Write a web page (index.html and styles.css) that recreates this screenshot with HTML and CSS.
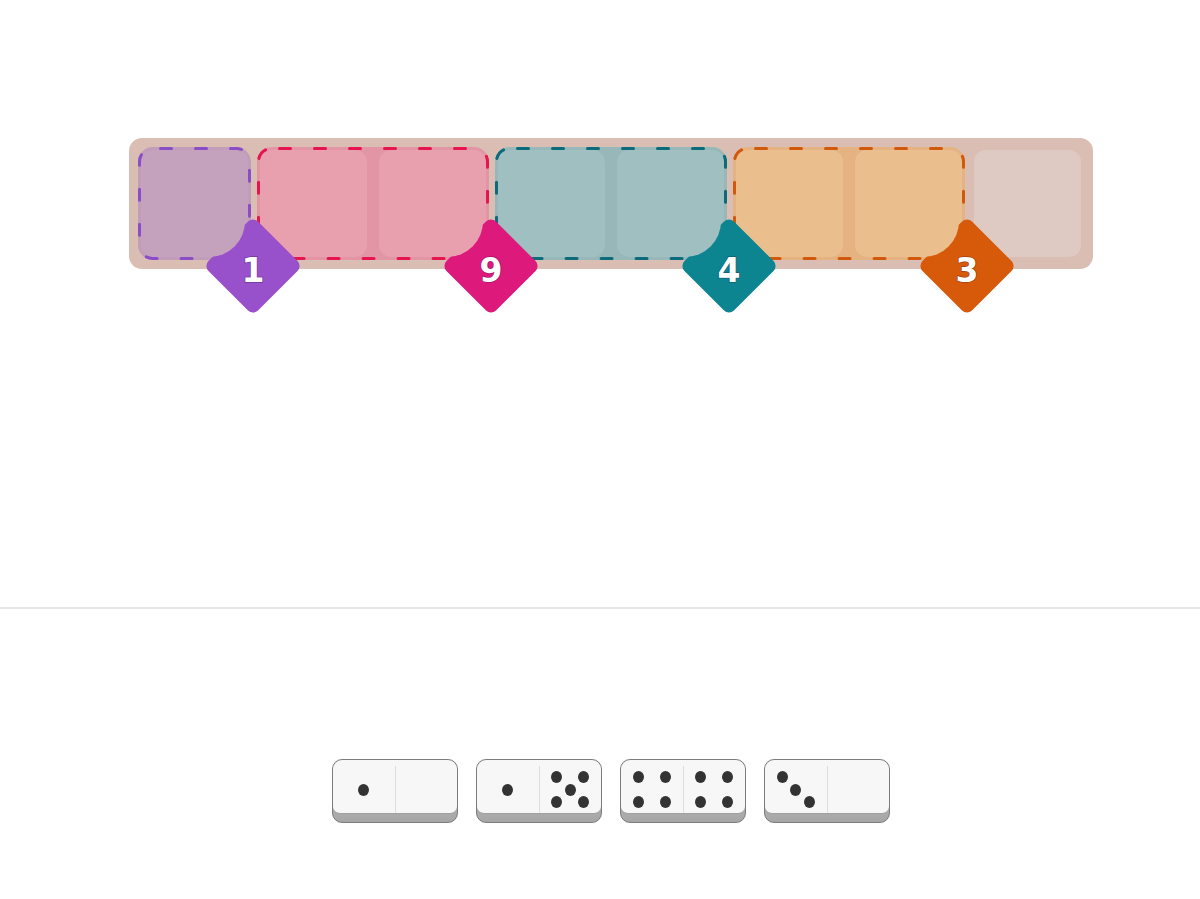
FILE: index.html
```html
<!DOCTYPE html>
<html lang="en">
<head>
<meta charset="utf-8">
<title>Domino puzzle</title>
<link rel="stylesheet" href="styles.css">
</head>
<body>
<div class="top">
  <div class="stage">
    <div class="board">
      <div class="region r-purple">
        <div class="cell"></div>
        <svg class="outline" width="113" height="113"><rect x="1.5" y="1.5" width="110" height="110" rx="13"/></svg>
        <svg class="badge" width="100" height="100" viewBox="0 0 100 100">
          <defs><mask id="m1" maskUnits="userSpaceOnUse" x="0" y="0" width="100" height="100"><rect x="0" y="0" width="100" height="100" fill="#fff"/><circle cx="6.5" cy="5.5" r="35.5" fill="#000"/></mask></defs>
          <g mask="url(#m1)"><rect class="shape" x="15" y="15" width="70" height="70" rx="7" transform="rotate(45 50 50)"/></g>
          <text x="50" y="66" text-anchor="middle">1</text>
        </svg>
      </div>
      <div class="region r-pink">
        <div class="cell"></div>
        <div class="cell"></div>
        <svg class="outline" width="232" height="113"><rect x="1.5" y="1.5" width="229" height="110" rx="13"/></svg>
        <svg class="badge" width="100" height="100" viewBox="0 0 100 100">
          <defs><mask id="m2" maskUnits="userSpaceOnUse" x="0" y="0" width="100" height="100"><rect x="0" y="0" width="100" height="100" fill="#fff"/><circle cx="6.5" cy="5.5" r="35.5" fill="#000"/></mask></defs>
          <g mask="url(#m2)"><rect class="shape" x="15" y="15" width="70" height="70" rx="7" transform="rotate(45 50 50)"/></g>
          <text x="50" y="66" text-anchor="middle">9</text>
        </svg>
      </div>
      <div class="region r-teal">
        <div class="cell"></div>
        <div class="cell"></div>
        <svg class="outline" width="232" height="113"><rect x="1.5" y="1.5" width="229" height="110" rx="13"/></svg>
        <svg class="badge" width="100" height="100" viewBox="0 0 100 100">
          <defs><mask id="m3" maskUnits="userSpaceOnUse" x="0" y="0" width="100" height="100"><rect x="0" y="0" width="100" height="100" fill="#fff"/><circle cx="6.5" cy="5.5" r="35.5" fill="#000"/></mask></defs>
          <g mask="url(#m3)"><rect class="shape" x="15" y="15" width="70" height="70" rx="7" transform="rotate(45 50 50)"/></g>
          <text x="50" y="66" text-anchor="middle">4</text>
        </svg>
      </div>
      <div class="region r-orange">
        <div class="cell"></div>
        <div class="cell"></div>
        <svg class="outline" width="232" height="113"><rect x="1.5" y="1.5" width="229" height="110" rx="13"/></svg>
        <svg class="badge" width="100" height="100" viewBox="0 0 100 100">
          <defs><mask id="m4" maskUnits="userSpaceOnUse" x="0" y="0" width="100" height="100"><rect x="0" y="0" width="100" height="100" fill="#fff"/><circle cx="6.5" cy="5.5" r="35.5" fill="#000"/></mask></defs>
          <g mask="url(#m4)"><rect class="shape" x="15" y="15" width="70" height="70" rx="7" transform="rotate(45 50 50)"/></g>
          <text x="50" y="66" text-anchor="middle">3</text>
        </svg>
      </div>
      <div class="cell empty"></div>
    </div>
  </div>
</div>
<div class="divider"></div>
<div class="tray">
  <div class="domino">
    <div class="face">
      <div class="half"><span class="pip p5"></span></div>
      <div class="sep"></div>
      <div class="half"></div>
    </div>
  </div>
  <div class="domino">
    <div class="face">
      <div class="half"><span class="pip p5"></span></div>
      <div class="sep"></div>
      <div class="half"><span class="pip p1"></span><span class="pip p3"></span><span class="pip p5"></span><span class="pip p7"></span><span class="pip p9"></span></div>
    </div>
  </div>
  <div class="domino">
    <div class="face">
      <div class="half"><span class="pip p1"></span><span class="pip p3"></span><span class="pip p7"></span><span class="pip p9"></span></div>
      <div class="sep"></div>
      <div class="half"><span class="pip p1"></span><span class="pip p3"></span><span class="pip p7"></span><span class="pip p9"></span></div>
    </div>
  </div>
  <div class="domino">
    <div class="face">
      <div class="half"><span class="pip p1"></span><span class="pip p5"></span><span class="pip p9"></span></div>
      <div class="sep"></div>
      <div class="half"></div>
    </div>
  </div>
</div>
</body>
</html>
```
FILE: styles.css
```css
html, body {
  margin: 0;
  background: #ffffff;
  font-family: "DejaVu Sans", "Liberation Sans", sans-serif;
}

.top {
  height: 607px;
}

.stage {
  display: flex;
  justify-content: center;
  padding: 138px 0 0 22px;
}

.board {
  display: flex;
  gap: 12px;
  padding: 12px;
  background: #dbbeb3;
  border-radius: 13px;
}

.cell {
  width: 107px;
  height: 107px;
  border-radius: 12px;
}

.empty {
  background: #dfcac3;
}

.region {
  position: relative;
  display: flex;
  gap: 12px;
  border-radius: 12px;
  background: var(--fill);
  box-shadow: 0 0 0 3px var(--fill);
}

.region .cell {
  background: var(--cell);
}

.r-purple { --fill: #c19db9; --cell: #c4a1bd; --line: #8b4cc8; --badge: #9950cb; }
.r-pink   { --fill: #e296a5; --cell: #e89fae; --line: #e6144f; --badge: #dd1a7c; }
.r-teal   { --fill: #98b7b9; --cell: #9fbfc1; --line: #0c6b7a; --badge: #0d8591; }
.r-orange { --fill: #e4b381; --cell: #eabe8d; --line: #d2590b; --badge: #d65a0a; }

.outline {
  position: absolute;
  left: -3px;
  top: -3px;
  z-index: 1;
  overflow: visible;
}

.outline rect {
  fill: none;
  stroke: var(--line);
  stroke-width: 3;
  stroke-dasharray: 11 24;
  stroke-dashoffset: -8;
  stroke-linecap: round;
}

.badge {
  position: absolute;
  right: -54.5px;
  bottom: -58.5px;
  z-index: 5;
  overflow: visible;
}

.badge .shape {
  fill: var(--badge);
}

.badge text {
  font-family: "DejaVu Sans", sans-serif;
  font-weight: bold;
  font-size: 33px;
  fill: #ffffff;
  stroke: rgba(30, 10, 60, 0.35);
  stroke-width: 1.5px;
  paint-order: stroke;
}

.divider {
  height: 2px;
  background: #e6e6e6;
}

.tray {
  display: flex;
  justify-content: center;
  gap: 18px;
  padding: 150px 0 0 22px;
}

.domino {
  width: 124px;
  height: 62px;
  border: 1px solid #7c7c7c;
  border-radius: 10px;
  background: linear-gradient(#cbcbcb, #a6a6a6);
  overflow: hidden;
}

.face {
  display: flex;
  height: 53px;
  background: #f7f7f7;
  border-radius: 9px 9px 7px 7px;
  border-bottom: 1px solid #a0a0a0;
}

.half {
  flex: 1;
  display: grid;
  grid-template-columns: repeat(3, 13.5px);
  grid-template-rows: repeat(3, 12.5px);
  justify-content: center;
  align-content: center;
  padding-top: 6px;
}

.sep {
  width: 1px;
  margin-top: 6px;
  background: #dedede;
}

.pip {
  width: 11px;
  height: 12px;
  border-radius: 50%;
  background: #333333;
  align-self: center;
  justify-self: center;
}

.p1 { grid-area: 1 / 1; }
.p3 { grid-area: 1 / 3; }
.p5 { grid-area: 2 / 2; }
.p7 { grid-area: 3 / 1; }
.p9 { grid-area: 3 / 3; }
```
